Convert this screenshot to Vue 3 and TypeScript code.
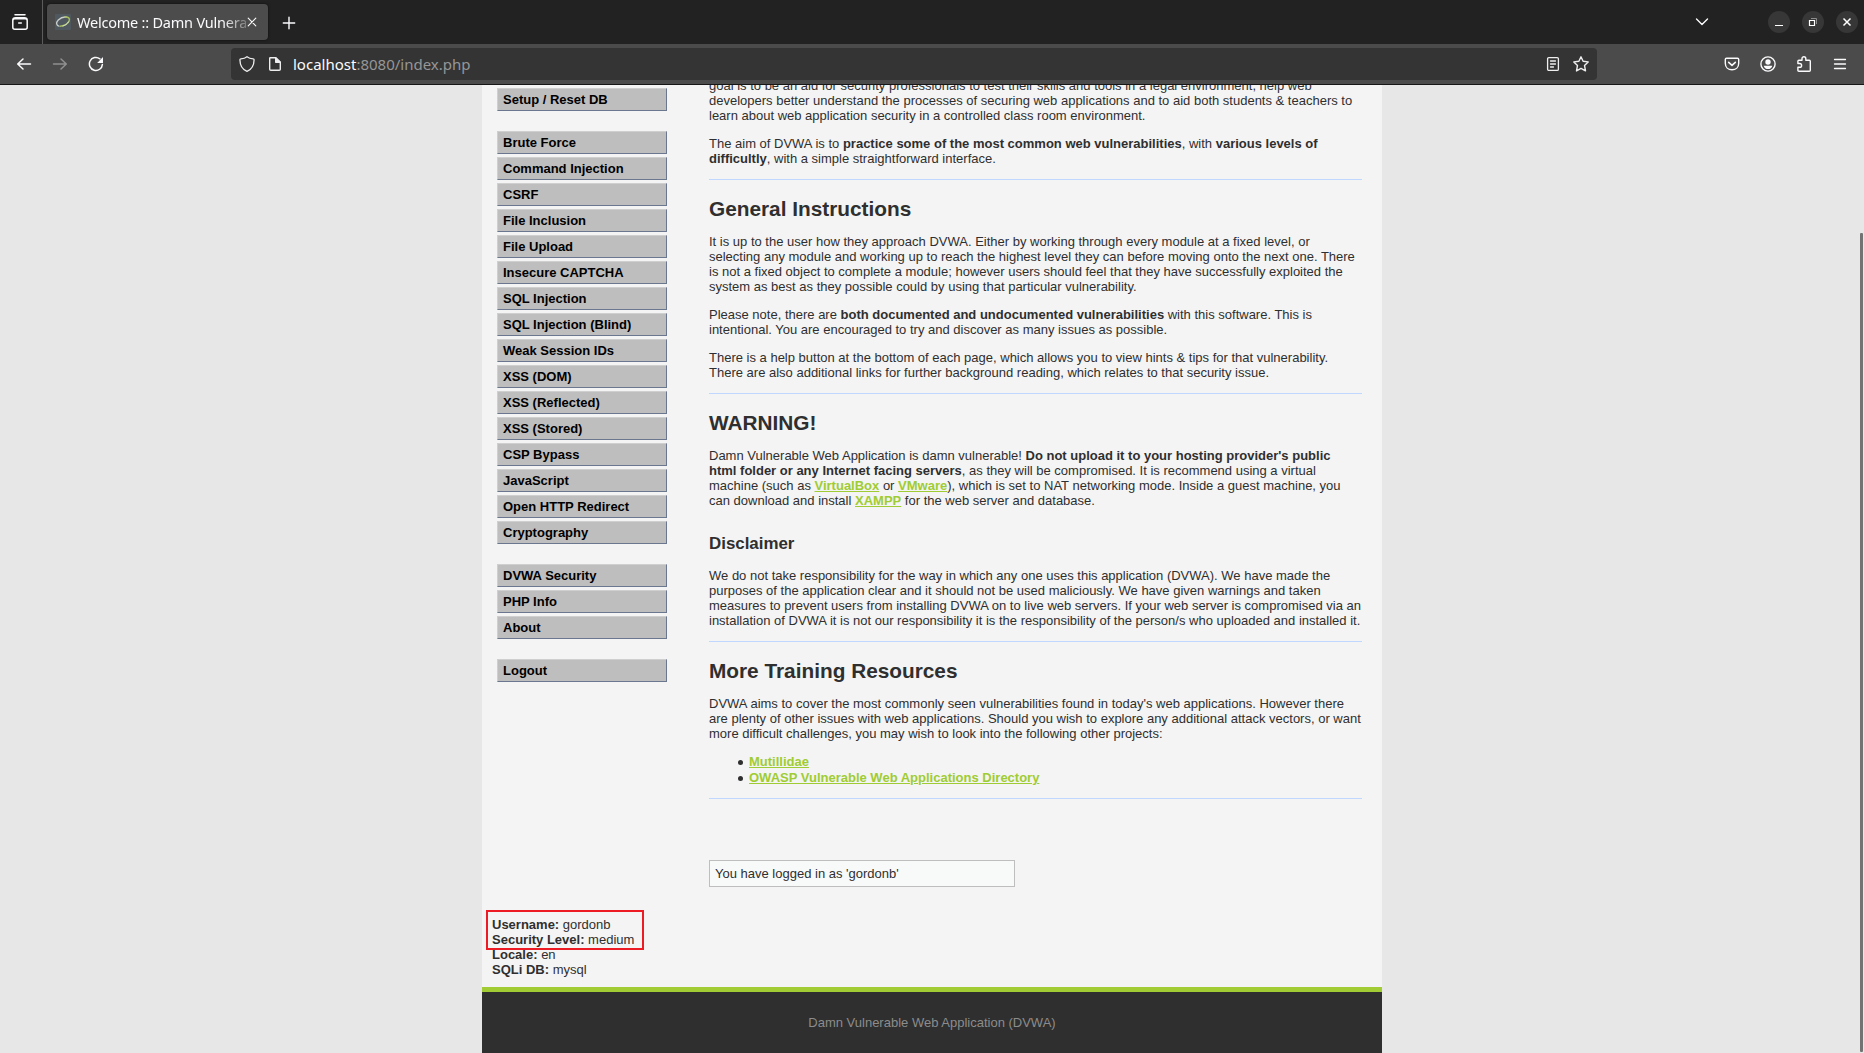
<script setup lang="ts">
const menuGroups: string[][] = [
  ['Setup / Reset DB'],
  [
    'Brute Force', 'Command Injection', 'CSRF', 'File Inclusion', 'File Upload', 'Insecure CAPTCHA',
    'SQL Injection', 'SQL Injection (Blind)', 'Weak Session IDs', 'XSS (DOM)', 'XSS (Reflected)',
    'XSS (Stored)', 'CSP Bypass', 'JavaScript', 'Open HTTP Redirect', 'Cryptography',
  ],
  ['DVWA Security', 'PHP Info', 'About'],
  ['Logout'],
]

const systemInfo: { label: string; value: string }[] = [
  { label: 'Username:', value: 'gordonb' },
  { label: 'Security Level:', value: 'medium' },
  { label: 'Locale:', value: 'en' },
  { label: 'SQLi DB:', value: 'mysql' },
]
</script>

<template>
  <div class="browser">
    <header class="tabbar">
      <div class="recent">
        <svg width="18" height="18" viewBox="0 0 18 18" fill="none" stroke="#fbfbfe" stroke-width="1.5" stroke-linecap="round">
          <path d="M4 1.7h10M3.8 5.7h10.4a2 2 0 0 1 2 2v6.5a2 2 0 0 1-2 2H3.800a2 2 0 0 1-2-2V7.700a2 2 0 0 1 2-2zM1.800 7.200q0-2.500 2.800-2.500h8.800q2.800 0 2.800 2.500" />
          <path d="M7.700 9.900h2.600" />
        </svg>
      </div>
      <div class="tab">
        <svg class="favicon" width="16" height="16" viewBox="0 0 16 16" fill="none">
          <rect width="16" height="16" rx="1" fill="#50585f" />
          <path d="M4.500 12.300C1 11.800.8 8.500 3.300 6 5.700 3.700 9.500 2.700 12 3.200" stroke="#c9cdcb" stroke-width="1.300" />
          <path d="M9.500 3.100c4-.6 5.700 1.200 4.600 4-1.100 2.700-5 5.200-9.300 5.200" stroke="#a4bd5c" stroke-width="1.500" />
          <path d="M13.700 7.500c-1.200 2.400-3.900 4.100-6.200 4.600" stroke="#d5ddd4" stroke-width="1" />
        </svg>
        <span class="tab-title">Welcome :: Damn Vulnera</span>
        <svg class="tab-close" width="10" height="10" viewBox="0 0 10 10" stroke="#fbfbfe" stroke-width="1.100" stroke-linecap="round"><path d="M1.200 1.200l7.600 7.600M8.800 1.200L1.200 8.800" /></svg>
      </div>
      <svg class="newtab" width="14" height="14" viewBox="0 0 14 14" stroke="#fbfbfe" stroke-width="1.400" stroke-linecap="round"><path d="M7 1.300v11.400M1.300 7h11.400" /></svg>
      <svg class="chevron" width="14" height="10" viewBox="0 0 14 10" fill="none" stroke="#fbfbfe" stroke-width="1.400" stroke-linecap="round" stroke-linejoin="round"><path d="M1.500 2L7 7.500 12.500 2" /></svg>
      <div class="window-buttons">
        <span class="winbtn"><svg width="22" height="22" viewBox="0 0 22 22"><path d="M7 14h8v1H7z" fill="#fff" /></svg></span>
        <span class="winbtn"><svg width="22" height="22" viewBox="0 0 22 22" fill="none"><path d="M9 7.500h5.500V13" stroke="#8d8d8d" /><path d="M7.500 9.500h5v5h-5z" stroke="#fff" stroke-width="1.200" /></svg></span>
        <span class="winbtn"><svg width="22" height="22" viewBox="0 0 22 22"><path d="M7.500 7.500l7 7M14.500 7.500l-7 7" stroke="#fff" stroke-width="1.500" /></svg></span>
      </div>
    </header>

    <nav class="toolbar">
      <svg class="back" width="16" height="16" viewBox="0 0 16 16" fill="none" stroke="#fbfbfe" stroke-width="1.500" stroke-linecap="round" stroke-linejoin="round"><path d="M14.500 8H2M7 3L1.700 8 7 13" /></svg>
      <svg class="forward" width="16" height="16" viewBox="0 0 16 16" fill="none" stroke="#909091" stroke-width="1.500" stroke-linecap="round" stroke-linejoin="round"><path d="M1.500 8H14M9 3l5.300 5L9 13" /></svg>
      <svg class="reload" width="16" height="16" viewBox="0 0 16 16" fill="none"><path d="M14.400 8.400a6.500 6.500 0 1 1-2.500-5.600" stroke="#fbfbfe" stroke-width="1.500" stroke-linecap="round" /><path d="M15 1v6H9.200z" fill="#fbfbfe" /></svg>
      <div class="urlbar">
        <svg class="shield" width="16" height="16" viewBox="0 0 16 16" fill="none" stroke="#eeeef0" stroke-width="1.300" stroke-linejoin="round"><path d="M8 .8c-1.500 1.300-4 2-6.200 2-.6 0-.9.4-.9 1C1 9.200 3.800 13.700 8 15.400c4.200-1.700 7-6.200 7.100-11.600 0-.6-.3-1-.9-1-2.200 0-4.700-.7-6.200-2z" /></svg>
        <svg class="page-icon" width="14" height="16" viewBox="0 0 14 16" fill="none" stroke="#eeeef0" stroke-width="1.400" stroke-linejoin="round"><path d="M2.300 1.700h5.400l4.600 4.600v6.900a1.100 1.100 0 0 1-1.100 1.100H2.800a1.100 1.100 0 0 1-1.100-1.100V2.300a.6.6 0 0 1 .6-.6z" /><path d="M7.700 1.700v4.600h4.600z" fill="#eeeef0" /></svg>
        <span class="url"><b>localhost</b>:8080/index.php</span>
        <svg class="reader" width="14" height="16" viewBox="0 0 14 16" fill="none" stroke="#eeeef0" stroke-width="1.300" stroke-linecap="round"><rect x="1.600" y="1.600" width="10.800" height="12.800" rx="1.200" /><path d="M4.500 5h5M4.500 8h5M4.500 11h3" /></svg>
        <svg class="star" width="18" height="18" viewBox="0 0 18 18" fill="none" stroke="#eeeef0" stroke-width="1.400" stroke-linejoin="round"><path d="M9 1.800l2.100 4.500 5.100.6-3.700 3.500 1 5.500L9 13.400l-4.500 2.500 1-5.500L1.800 6.900l5.100-.6z" /></svg>
      </div>
      <svg class="pocket" width="16" height="16" viewBox="0 0 16 16" fill="none" stroke="#fbfbfe" stroke-width="1.400" stroke-linecap="round" stroke-linejoin="round"><path d="M2.500 2.200h11c.7 0 1.200.5 1.200 1.200v3.800c0 4-2.900 6.600-6.700 6.600s-6.700-2.600-6.700-6.600V3.400c0-.7.5-1.200 1.200-1.200z" /><path d="M4.700 6.300L8 9.300l3.300-3" stroke-width="1.600" /></svg>
      <svg class="account" width="16" height="16" viewBox="0 0 16 16" fill="none"><circle cx="8" cy="8" r="7.100" stroke="#fbfbfe" stroke-width="1.400" /><circle cx="8" cy="6" r="2.700" fill="#fbfbfe" /><path d="M3.700 9.700h8.600c-.5 2.100-2.200 3.400-4.300 3.400s-3.800-1.300-4.300-3.400z" fill="#fbfbfe" /></svg>
      <svg class="puzzle" width="16" height="18" viewBox="0 0 16 18" fill="none" stroke="#fbfbfe" stroke-width="1.400" stroke-linejoin="round"><path d="M6 5.200V3.600a1.900 1.900 0 0 1 3.800 0v1.600h3.500c.6 0 1 .4 1 1v9.100c0 .6-.4 1-1 1H2.900c-.6 0-1-.4-1-1v-3h1.800a1.900 1.900 0 0 0 0-3.800H1.900V6.200c0-.6.400-1 1-1z" /></svg>
      <svg class="menu-icon" width="14" height="14" viewBox="0 0 14 14" stroke="#fbfbfe" stroke-width="1.300" stroke-linecap="round"><path d="M1.500 2.500h11M1.500 7h11M1.500 11.500h11" /></svg>
    </nav>

    <div class="viewport">
      <div class="container">
        <div class="columns">
          <div class="menu">
            <ul v-for="(group, i) in menuGroups" :key="i" class="menu-group">
              <li v-for="item in group" :key="item">{{ item }}</li>
            </ul>
          </div>
          <main class="body">
            <p>goal is to be an aid for security professionals to test their skills and tools in a legal environment, help web<br />developers better understand the processes of securing web applications and to aid both students &amp; teachers to<br />learn about web application security in a controlled class room environment.</p>
            <p>The aim of DVWA is to <strong>practice some of the most common web vulnerabilities</strong>, with <strong>various levels of<br />difficultly</strong>, with a simple straightforward interface.</p>
            <hr />
            <h1>General Instructions</h1>
            <p>It is up to the user how they approach DVWA. Either by working through every module at a fixed level, or<br />selecting any module and working up to reach the highest level they can before moving onto the next one. There<br />is not a fixed object to complete a module; however users should feel that they have successfully exploited the<br />system as best as they possible could by using that particular vulnerability.</p>
            <p>Please note, there are <strong>both documented and undocumented vulnerabilities</strong> with this software. This is<br />intentional. You are encouraged to try and discover as many issues as possible.</p>
            <p>There is a help button at the bottom of each page, which allows you to view hints &amp; tips for that vulnerability.<br />There are also additional links for further background reading, which relates to that security issue.</p>
            <hr />
            <h1>WARNING!</h1>
            <p>Damn Vulnerable Web Application is damn vulnerable! <strong>Do not upload it to your hosting provider's public<br />html folder or any Internet facing servers</strong>, as they will be compromised. It is recommend using a virtual<br />machine (such as <a>VirtualBox</a> or <a>VMware</a>), which is set to NAT networking mode. Inside a guest machine, you<br />can download and install <a>XAMPP</a> for the web server and database.</p>
            <h2>Disclaimer</h2>
            <p>We do not take responsibility for the way in which any one uses this application (DVWA). We have made the<br />purposes of the application clear and it should not be used maliciously. We have given warnings and taken<br />measures to prevent users from installing DVWA on to live web servers. If your web server is compromised via an<br />installation of DVWA it is not our responsibility it is the responsibility of the person/s who uploaded and installed it.</p>
            <hr />
            <h1>More Training Resources</h1>
            <p>DVWA aims to cover the most commonly seen vulnerabilities found in today's web applications. However there<br />are plenty of other issues with web applications. Should you wish to explore any additional attack vectors, or want<br />more difficult challenges, you may wish to look into the following other projects:</p>
            <ul class="links">
              <li><a>Mutillidae</a></li>
              <li><a>OWASP Vulnerable Web Applications Directory</a></li>
            </ul>
            <hr />
            <div class="message">You have logged in as 'gordonb'</div>
          </main>
        </div>
        <div class="system-info">
          <div v-for="row in systemInfo" :key="row.label"><strong>{{ row.label }}</strong> {{ row.value }}</div>
          <div class="highlight"></div>
        </div>
        <footer class="footer">Damn Vulnerable Web Application (DVWA)</footer>
      </div>
      <div class="scroll-thumb"></div>
    </div>
  </div>
</template>

<style>
body { margin: 0; overflow: hidden; }
</style>

<style scoped>
.browser { width: 1864px; height: 1053px; display: flex; flex-direction: column; overflow: hidden; background: #e7e7e7; }
svg { display: block; flex: none; }

.tabbar { height: 44px; flex: none; display: flex; align-items: center; background: #222; font-family: "Noto Sans", sans-serif; }
.recent { width: 42px; height: 44px; border-right: 1px solid #5c5c5c; display: flex; align-items: center; }
.recent svg { margin-left: 11px; }
.tab { width: 221px; height: 36px; margin-left: 4px; border-radius: 4px; background: #4c4c4c; box-shadow: 0 0 3px rgba(0, 0, 0, .6); display: flex; align-items: center; box-sizing: border-box; padding-left: 8px; }
.tab-title { width: 169px; margin-left: 6px; white-space: nowrap; font-size: 14.500px; letter-spacing: -.22px; line-height: 22px; color: #fbfbfe; -webkit-mask-image: linear-gradient(to right, #000 146px, transparent 178px); mask-image: linear-gradient(to right, #000 146px, transparent 178px); }
.tab-close { margin-left: 1px; }
.newtab { margin: 1px 0 0 14px; }
.chevron { margin-left: auto; }
.window-buttons { display: flex; gap: 12px; margin: 0 6px 0 59px; }
.winbtn { width: 22px; height: 22px; border-radius: 50%; background: #373737; }

.toolbar { height: 40px; flex: none; display: flex; align-items: center; background: #4b4b4b; border-bottom: 1px solid #161616; font-family: "Noto Sans", sans-serif; }
.back { margin-left: 16px; }
.forward { margin-left: 20px; }
.reload { margin-left: 20px; }
.urlbar { width: 1366px; height: 32px; margin-left: 127px; border-radius: 4px; background: #343434; display: flex; align-items: center; }
.shield { margin-left: 8px; }
.page-icon { margin-left: 13px; }
.url { margin-left: 11px; font-size: 15px; line-height: 22px; color: #969697; white-space: nowrap; }
.url b { font-weight: 400; color: #fbfbfe; }
.reader { margin-left: auto; }
.star { margin: 0 7px 0 12px; }
.pocket { margin-left: 127px; }
.account { margin: 0 0 0 20px; }
.puzzle { margin-left: 20px; }
.menu-icon { margin-left: 21px; }

.viewport { flex: 1; min-height: 0; position: relative; overflow: hidden; font-family: Arial, "Liberation Sans", sans-serif; font-size: 13px; line-height: 15px; color: #2f2f2f; }
.container { width: 900px; height: 975px; margin: -7px auto 0; background: #f4f4f4; display: flex; flex-direction: column; }
.columns { display: flex; height: 809px; flex: none; }
.menu { width: 170px; padding: 10px 42px 0 15px; flex: none; }
.menu-group { list-style: none; margin: 0 0 20px; padding: 0; }
.menu-group li { height: 23px; box-sizing: border-box; margin-bottom: 3px; padding: 3px 5px; background: #bebebe; border: 1px solid; border-color: #cfcfcf #6b778f #6b778f #cfcfcf; color: #000; font-weight: bold; }
.body { width: 653px; flex: none; }
.body p { margin: 0 0 13px; white-space: nowrap; }
.body hr { height: 1px; border: 0; margin: 0; background: #c0d8ff; }
h1 { margin: 17px 0 13px; font-size: 20.800px; line-height: 24px; font-weight: bold; }
h2 { margin: 26px 0 15px; font-size: 16.900px; line-height: 19px; font-weight: bold; }
a { color: #9fcc33; font-weight: bold; text-decoration: underline; }
.links { list-style: none; margin: 0 0 12px; padding: 0 0 0 29px; }
.links li { display: flex; height: 16px; line-height: 15px; }
.links li::before { content: ""; width: 5px; height: 5px; margin: 6px 6px 0 0; border-radius: 50%; background: #2f2f2f; }
.message { width: 306px; height: 27px; box-sizing: border-box; margin-top: 61px; padding: 5px; border: 1px solid #bebebe; background: #f8fafa; }

.system-info { position: relative; height: 70px; flex: none; box-sizing: border-box; margin-top: 30px; padding-left: 10px; }
.highlight { position: absolute; left: 4px; top: -7px; width: 158px; height: 40px; box-sizing: border-box; border: 2px solid #ed1c24; }
.footer { flex: 1; border-top: 5px solid #a1cc33; background: #2f2f2f; color: #8c8c8c; text-align: center; padding-top: 23px; }
.scroll-thumb { position: absolute; right: 1px; top: 148px; bottom: 1px; width: 3px; border-radius: 1px; background: #737373; }
</style>
